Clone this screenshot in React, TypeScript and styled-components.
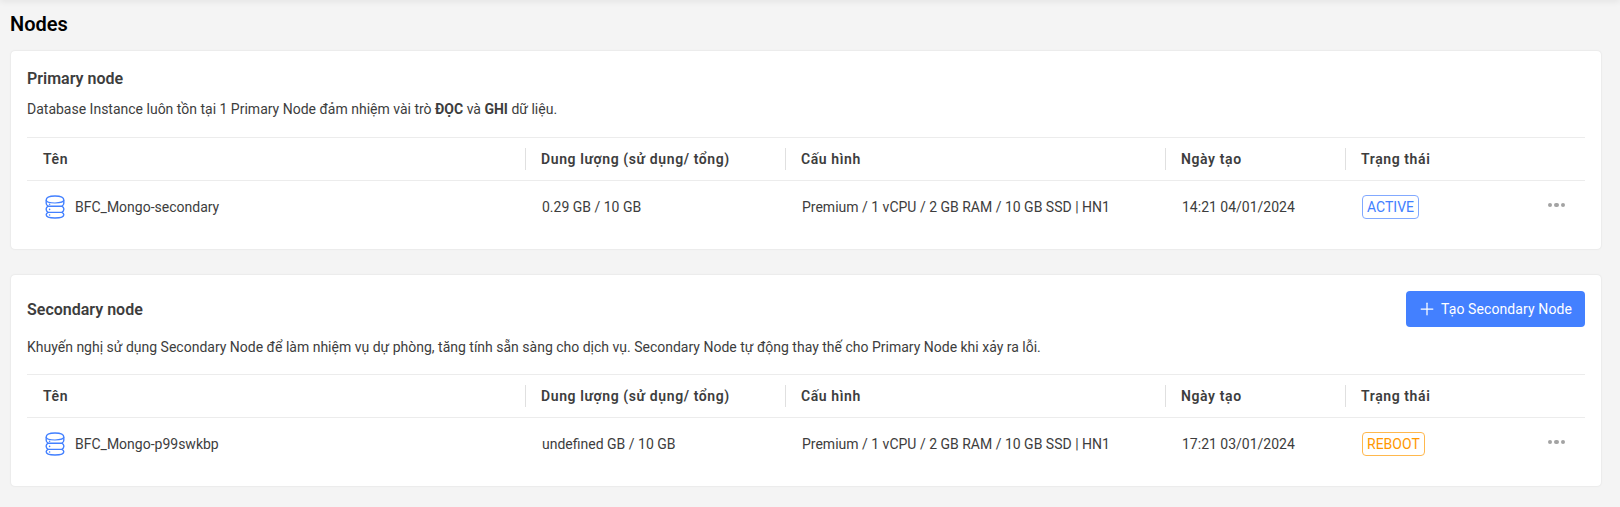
import React from 'react';
import styled, { createGlobalStyle } from 'styled-components';
import { Plus } from 'lucide-react';

interface NodeRow {
  name: string;
  storage: string;
  config: string;
  createdAt: string;
  status: 'ACTIVE' | 'REBOOT';
}

const primaryNodes: NodeRow[] = [
  {
    name: 'BFC_Mongo-secondary',
    storage: '0.29 GB / 10 GB',
    config: 'Premium / 1 vCPU / 2 GB RAM / 10 GB SSD | HN1',
    createdAt: '14:21 04/01/2024',
    status: 'ACTIVE',
  },
];

const secondaryNodes: NodeRow[] = [
  {
    name: 'BFC_Mongo-p99swkbp',
    storage: 'undefined GB / 10 GB',
    config: 'Premium / 1 vCPU / 2 GB RAM / 10 GB SSD | HN1',
    createdAt: '17:21 03/01/2024',
    status: 'REBOOT',
  },
];

const columns = ['Tên', 'Dung lượng (sử dụng/ tổng)', 'Cấu hình', 'Ngày tạo', 'Trạng thái'];

const DatabaseIcon = () => (
  <svg width="20" height="24" viewBox="0 0 20 24" fill="none" stroke="#4380ff" strokeWidth="1.4">
    <path d="M1.2 5C1.2 2.4 5 1 10 1S18.8 2.4 18.8 5V8.2C18.8 9.6 18 10.6 16.8 11.2H3.2C2 10.6 1.2 9.6 1.2 8.2Z" />
    <path d="M3.2 11.2C2 11.8 1.2 12.6 1.2 13.8V14.6C1.2 15.8 2 16.8 3.2 17.4H16.8C18 16.8 18.8 15.8 18.8 14.6V13.8C18.8 12.6 18 11.8 16.8 11.2" />
    <path d="M3.2 17.4C2 18 1.2 18.8 1.2 19.8C1.2 21.8 5 23 10 23S18.8 21.8 18.8 19.8C18.8 18.8 18 18 16.8 17.4" />
    <path d="M1.2 5C1.2 6.8 5 8 10 8S18.8 6.8 18.8 5" strokeWidth="1.2" />
    <circle cx="4.6" cy="9.2" r="0.8" fill="#4380ff" stroke="none" />
    <circle cx="4.6" cy="14.4" r="0.8" fill="#4380ff" stroke="none" />
    <circle cx="4.6" cy="20" r="0.8" fill="#4380ff" stroke="none" />
  </svg>
);

const NodeTable: React.FC<{ rows: NodeRow[] }> = ({ rows }) => (
  <Table>
    <HeaderRow>
      {columns.map((col, index) => (
        <HeaderCell key={col} $divider={index > 0}>
          {col}
        </HeaderCell>
      ))}
    </HeaderRow>
    {rows.map((row) => (
      <BodyRow key={row.name}>
        <NameCell>
          <DatabaseIcon />
          {row.name}
        </NameCell>
        <BodyCell>{row.storage}</BodyCell>
        <BodyCell>{row.config}</BodyCell>
        <BodyCell>{row.createdAt}</BodyCell>
        <StatusCell>
          <StatusTag $status={row.status}>{row.status}</StatusTag>
          <MoreButton aria-label="more">
            <Dot />
            <Dot />
            <Dot />
          </MoreButton>
        </StatusCell>
      </BodyRow>
    ))}
  </Table>
);

const App: React.FC = () => (
  <Page>
    <GlobalStyle />
    <TopShadow />
    <PageTitle>Nodes</PageTitle>
    <Card>
      <CardHead>
        <CardTitle>Primary node</CardTitle>
      </CardHead>
      <Description $after={18}>
        Database Instance luôn tồn tại 1 Primary Node đảm nhiệm vài trò <b>ĐỌC</b> và <b>GHI</b> dữ liệu.
      </Description>
      <NodeTable rows={primaryNodes} />
    </Card>
    <Card>
      <CardHead>
        <CardTitle>Secondary node</CardTitle>
        <CreateButton>
          <Plus size={20} strokeWidth={1.5} />
          Tạo Secondary Node
        </CreateButton>
      </CardHead>
      <Description $after={17}>
        Khuyến nghị sử dụng Secondary Node để làm nhiệm vụ dự phòng, tăng tính sẵn sàng cho dịch vụ. Secondary Node tự
        động thay thế cho Primary Node khi xảy ra lỗi.
      </Description>
      <NodeTable rows={secondaryNodes} />
    </Card>
  </Page>
);

const GlobalStyle = createGlobalStyle`
  html, body {
    margin: 0;
    padding: 0;
    background: #f4f4f4;
    font-family: Roboto, "Noto Sans", sans-serif;
    font-size: 14px;
    color: #3d3d3d;
    overflow: hidden;
  }
`;

const Page = styled.div`
  position: relative;
  height: 507px;
  box-sizing: border-box;
  padding: 12px 19px 0 10px;
  display: flex;
  flex-direction: column;
`;

const TopShadow = styled.div`
  position: absolute;
  top: -4px;
  left: 0;
  right: 0;
  height: 4px;
  box-shadow: 0 1px 6px rgba(0, 0, 0, 0.1);
`;

const PageTitle = styled.h1`
  margin: 0 0 15px;
  font-size: 20px;
  line-height: 24px;
  font-weight: 600;
  color: #000;
`;

const Card = styled.section`
  background: #fff;
  border-radius: 4px;
  box-shadow: 0 0 2px rgba(0, 0, 0, 0.12);
  margin: 0 0 26px 1px;
  padding: 16px;
`;

const CardHead = styled.div`
  display: flex;
  align-items: center;
  justify-content: space-between;
`;

const CardTitle = styled.h2`
  margin: 0 0 -1px;
  padding-top: 1px;
  font-size: 16px;
  line-height: 22px;
  font-weight: 600;
  color: #3d3d3d;
`;

const Description = styled.p<{ $after: number }>`
  margin: 10px 0 ${(p) => p.$after}px;
  font-size: 14px;
  line-height: 20px;
  color: #3d3d3d;

  b {
    font-weight: 700;
  }
`;

const CreateButton = styled.button`
  display: flex;
  align-items: center;
  gap: 4px;
  width: 179px;
  height: 36px;
  box-sizing: border-box;
  padding: 0 0 0 11px;
  border: 0;
  border-radius: 4px;
  background: #4380ff;
  color: #fff;
  font-family: inherit;
  font-size: 14px;
  letter-spacing: 0.1px;
`;

const Table = styled.div`
  display: flex;
  flex-direction: column;
`;

const gridColumns = '499px 260px 380px 180px 1fr';

const HeaderRow = styled.div`
  display: grid;
  grid-template-columns: ${gridColumns};
  align-items: center;
  height: 44px;
  box-sizing: border-box;
  border-top: 1px solid #ececec;
  border-bottom: 1px solid #ececec;
`;

const HeaderCell = styled.div<{ $divider: boolean }>`
  height: 22px;
  line-height: 22px;
  margin-left: ${(p) => (p.$divider ? '-1px' : '0')};
  padding-left: ${(p) => (p.$divider ? '15px' : '16px')};
  border-left: ${(p) => (p.$divider ? '1px solid #e0e0e0' : '0')};
  font-weight: 600;
  letter-spacing: 0.6px;
  color: #3d3d3d;
`;

const BodyRow = styled.div`
  display: grid;
  grid-template-columns: ${gridColumns};
  align-items: center;
  height: 52px;
`;

const BodyCell = styled.div`
  padding-left: 16px;
`;

const NameCell = styled(BodyCell)`
  display: flex;
  align-items: center;
  gap: 10px;
  padding-left: 18px;
`;

const StatusCell = styled(BodyCell)`
  display: flex;
  align-items: center;
  justify-content: space-between;
  padding-right: 20px;
`;

const StatusTag = styled.span<{ $status: NodeRow['status'] }>`
  display: inline-block;
  height: 24px;
  line-height: 22px;
  box-sizing: border-box;
  padding: 0 4px;
  border-radius: 4px;
  border: 1px solid ${(p) => (p.$status === 'ACTIVE' ? '#82a9ff' : '#ffb84d')};
  color: ${(p) => (p.$status === 'ACTIVE' ? '#4380ff' : '#ff9800')};
`;

const MoreButton = styled.span`
  display: flex;
  gap: 2px;
  margin-top: -4px;
`;

const Dot = styled.i`
  display: block;
  width: 4.5px;
  height: 4.5px;
  border-radius: 50%;
  background: #a3a3a3;
`;

export default App;
